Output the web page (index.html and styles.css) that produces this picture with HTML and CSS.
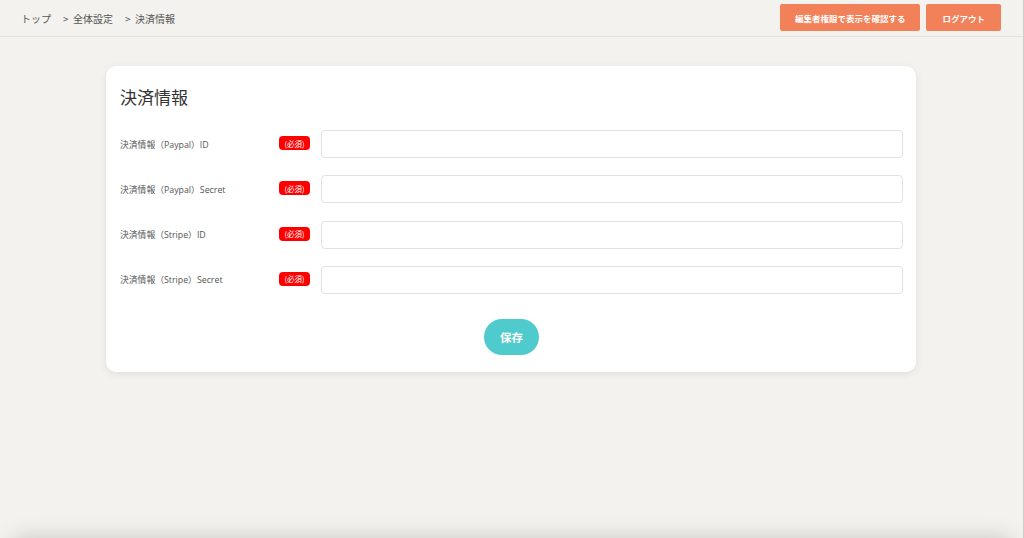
FILE: index.html
```html
<!DOCTYPE html>
<html lang="ja">
<head>
    <meta charset="UTF-8">
    <meta name="viewport" content="width=device-width, initial-scale=1.0">
    <link rel="stylesheet" href="styles.css">
    <title>決済情報</title>
</head>
<body>
    <header class="topbar">
        <nav class="crumbs">
            <span>トップ</span>
            <span>&gt;&nbsp; 全体設定</span>
            <span>&gt;&nbsp; 決済情報</span>
        </nav>
        <div class="topbtns">
            <div class="btn">編集者権限で表示を確認する</div>
            <div class="btn">ログアウト</div>
        </div>
    </header>

    <main class="page">
        <section class="card">
            <h1 class="title">決済情報</h1>
            <div class="rows">
                <div class="row">
                    <label class="lbl">決済情報（Paypal）ID</label>
                    <span class="req">(必須)</span>
                    <input class="field" type="text">
                </div>
                <div class="row">
                    <label class="lbl">決済情報（Paypal）Secret</label>
                    <span class="req">(必須)</span>
                    <input class="field" type="text">
                </div>
                <div class="row">
                    <label class="lbl">決済情報（Stripe）ID</label>
                    <span class="req">(必須)</span>
                    <input class="field" type="text">
                </div>
                <div class="row">
                    <label class="lbl">決済情報（Stripe）Secret</label>
                    <span class="req">(必須)</span>
                    <input class="field" type="text">
                </div>
            </div>
            <div class="save"><div class="savebtn">保存</div></div>
        </section>
    </main>

    <div class="footshade"></div>
</body>
</html>
```

FILE: styles.css
```css
html, body {
    height: 100%;
}
body {
    margin: 0;
    background-color: #f3f2ee;
    color: #3a3a3a;
    font-family: "Noto Sans CJK JP", "Noto Sans", sans-serif;
    border-right: 1px solid #cfcecb;
    box-sizing: border-box;
    overflow: hidden;
}
.topbar {
    height: 36px;
    border-bottom: 1px solid #e2e1dd;
    display: flex;
    align-items: center;
    justify-content: space-between;
    padding: 0 22px 0 21px;
}
.crumbs {
    display: flex;
    gap: 12px;
    font-size: 10px;
    color: #555;
}
.topbtns {
    display: flex;
    gap: 6px;
    margin-top: -1px;
}
.btn {
    height: 27px;
    padding: 0 15px;
    display: flex;
    align-items: center;
    background-color: #f28058;
    color: #fff;
    font-size: 8.5px;
    font-weight: 700;
    border-radius: 2px;
}
.btn + .btn {
    padding: 0 16px;
}
.page {
    padding: 29px 0 0 106px;
}
.card {
    width: 810px;
    box-sizing: border-box;
    background-color: #fff;
    border-radius: 10px;
    box-shadow: 0 2px 8px rgba(0, 0, 0, 0.08);
    padding: 19px 13px 17px 14px;
}
.title {
    margin: 0 0 21px;
    font-size: 17px;
    font-weight: 400;
    color: #333;
    line-height: 24px;
}
.rows {
    display: flex;
    flex-direction: column;
    gap: 17.3px;
}
.row {
    display: flex;
    align-items: center;
    height: 28px;
}
.lbl {
    width: 159px;
    font-family: "Open Sans", "Noto Sans CJK JP", sans-serif;
    font-size: 8.8px;
    color: #555;
}
.req {
    width: 31px;
    height: 14px;
    border-radius: 4px;
    background-color: #ff0000;
    color: #fff;
    font-size: 7.5px;
    display: flex;
    align-items: center;
    justify-content: center;
    margin-right: 11px;
    margin-top: -2px;
}
.field {
    flex: 1;
    height: 28px;
    box-sizing: border-box;
    border: 1px solid #e2e2e2;
    border-radius: 4px;
    background: #fff;
    margin: 0;
}
.save {
    display: flex;
    justify-content: center;
    margin-top: 25px;
}
.savebtn {
    width: 55px;
    height: 36px;
    border-radius: 18px;
    background-color: #4fcbcd;
    color: #fff;
    font-size: 11.5px;
    font-weight: 700;
    display: flex;
    align-items: center;
    justify-content: center;
}
.footshade {
    position: fixed;
    left: 14px;
    right: 14px;
    bottom: 0;
    height: 40px;
    transform: translateY(100%);
    box-shadow: 0 0 22px rgba(0, 0, 0, 0.18);
}
```
